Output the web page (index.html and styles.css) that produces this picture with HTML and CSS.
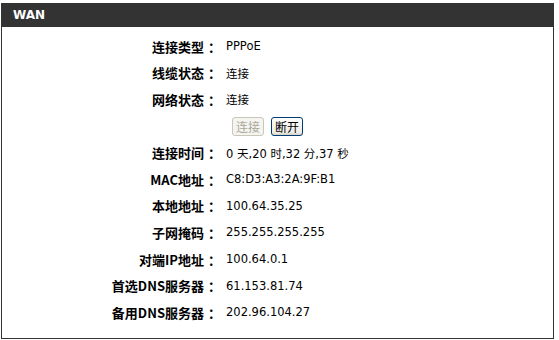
FILE: index.html
```html
<!DOCTYPE html>
<html lang="zh-CN">
<head>
  <meta charset="UTF-8">
  <title>WAN</title>
  <link rel="stylesheet" href="styles.css">
</head>
<body>
  <div class="box">
    <!-- Titulo -->
    <div class="box-title">WAN</div>

    <!-- Lista de estado -->
    <div class="info">
      <div class="row"><span class="label">连接类型</span><span class="colon">：</span><span class="value">PPPoE</span></div>
      <div class="row"><span class="label">线缆状态</span><span class="colon">：</span><span class="value">连接</span></div>
      <div class="row"><span class="label">网络状态</span><span class="colon">：</span><span class="value">连接</span></div>
      <div class="row row-buttons">
        <button class="btn" disabled>连接</button>
        <button class="btn btn-active">断开</button>
      </div>
      <div class="row"><span class="label">连接时间</span><span class="colon">：</span><span class="value">0 天,20 时,32 分,37 秒</span></div>
      <div class="row"><span class="label">MAC地址</span><span class="colon">：</span><span class="value">C8:D3:A3:2A:9F:B1</span></div>
      <div class="row"><span class="label">本地地址</span><span class="colon">：</span><span class="value">100.64.35.25</span></div>
      <div class="row"><span class="label">子网掩码</span><span class="colon">：</span><span class="value">255.255.255.255</span></div>
      <div class="row"><span class="label">对端IP地址</span><span class="colon">：</span><span class="value">100.64.0.1</span></div>
      <div class="row"><span class="label">首选DNS服务器</span><span class="colon">：</span><span class="value">61.153.81.74</span></div>
      <div class="row"><span class="label">备用DNS服务器</span><span class="colon">：</span><span class="value">202.96.104.27</span></div>
    </div>
  </div>
</body>
</html>
```

FILE: styles.css
```css
body {
  margin: 0;
  background: #fff;
  color: #000;
  font-family: 'DejaVu Sans', 'Noto Sans CJK SC', sans-serif;
}

.box {
  margin: 3px 0 0 1px;
  width: 553px;
  height: 336px;
  box-sizing: border-box;
  border: 1px solid #333;
  border-top: none;
  background: #fff;
}

.box-title {
  height: 24px;
  line-height: 24px;
  margin: 0 -1px;
  padding-left: 12px;
  background: #333;
  color: #fff;
  font-weight: bold;
  font-size: 12px;
}

.info {
  padding-top: 6px;
}

.row {
  display: flex;
  align-items: center;
  height: 26.6px;
}

.label {
  width: 202px;
  text-align: right;
  font-family: 'Noto Sans CJK SC', sans-serif;
  font-weight: bold;
  font-size: 13px;
}

.colon {
  width: 12px;
  margin-left: 4px;
  font-family: 'Noto Sans CJK SC', sans-serif;
  font-weight: bold;
  font-size: 13px;
}

.value {
  margin-left: 6px;
  font-size: 11.5px;
}

.row-buttons {
  padding-left: 230px;
  gap: 7px;
}

.btn {
  height: 19px;
  padding: 0 3px;
  font-family: 'Noto Sans CJK SC', sans-serif;
  font-size: 12px;
  line-height: 15px;
  border-radius: 3px;
  border: 1px solid #c9c7ba;
  background: #f4f4f0;
  color: #aca899;
}

.btn-active {
  border-color: #003c74;
  background: linear-gradient(to bottom, #fff, #ecebe6 85%, #d6d0c5);
  color: #000;
}
```
